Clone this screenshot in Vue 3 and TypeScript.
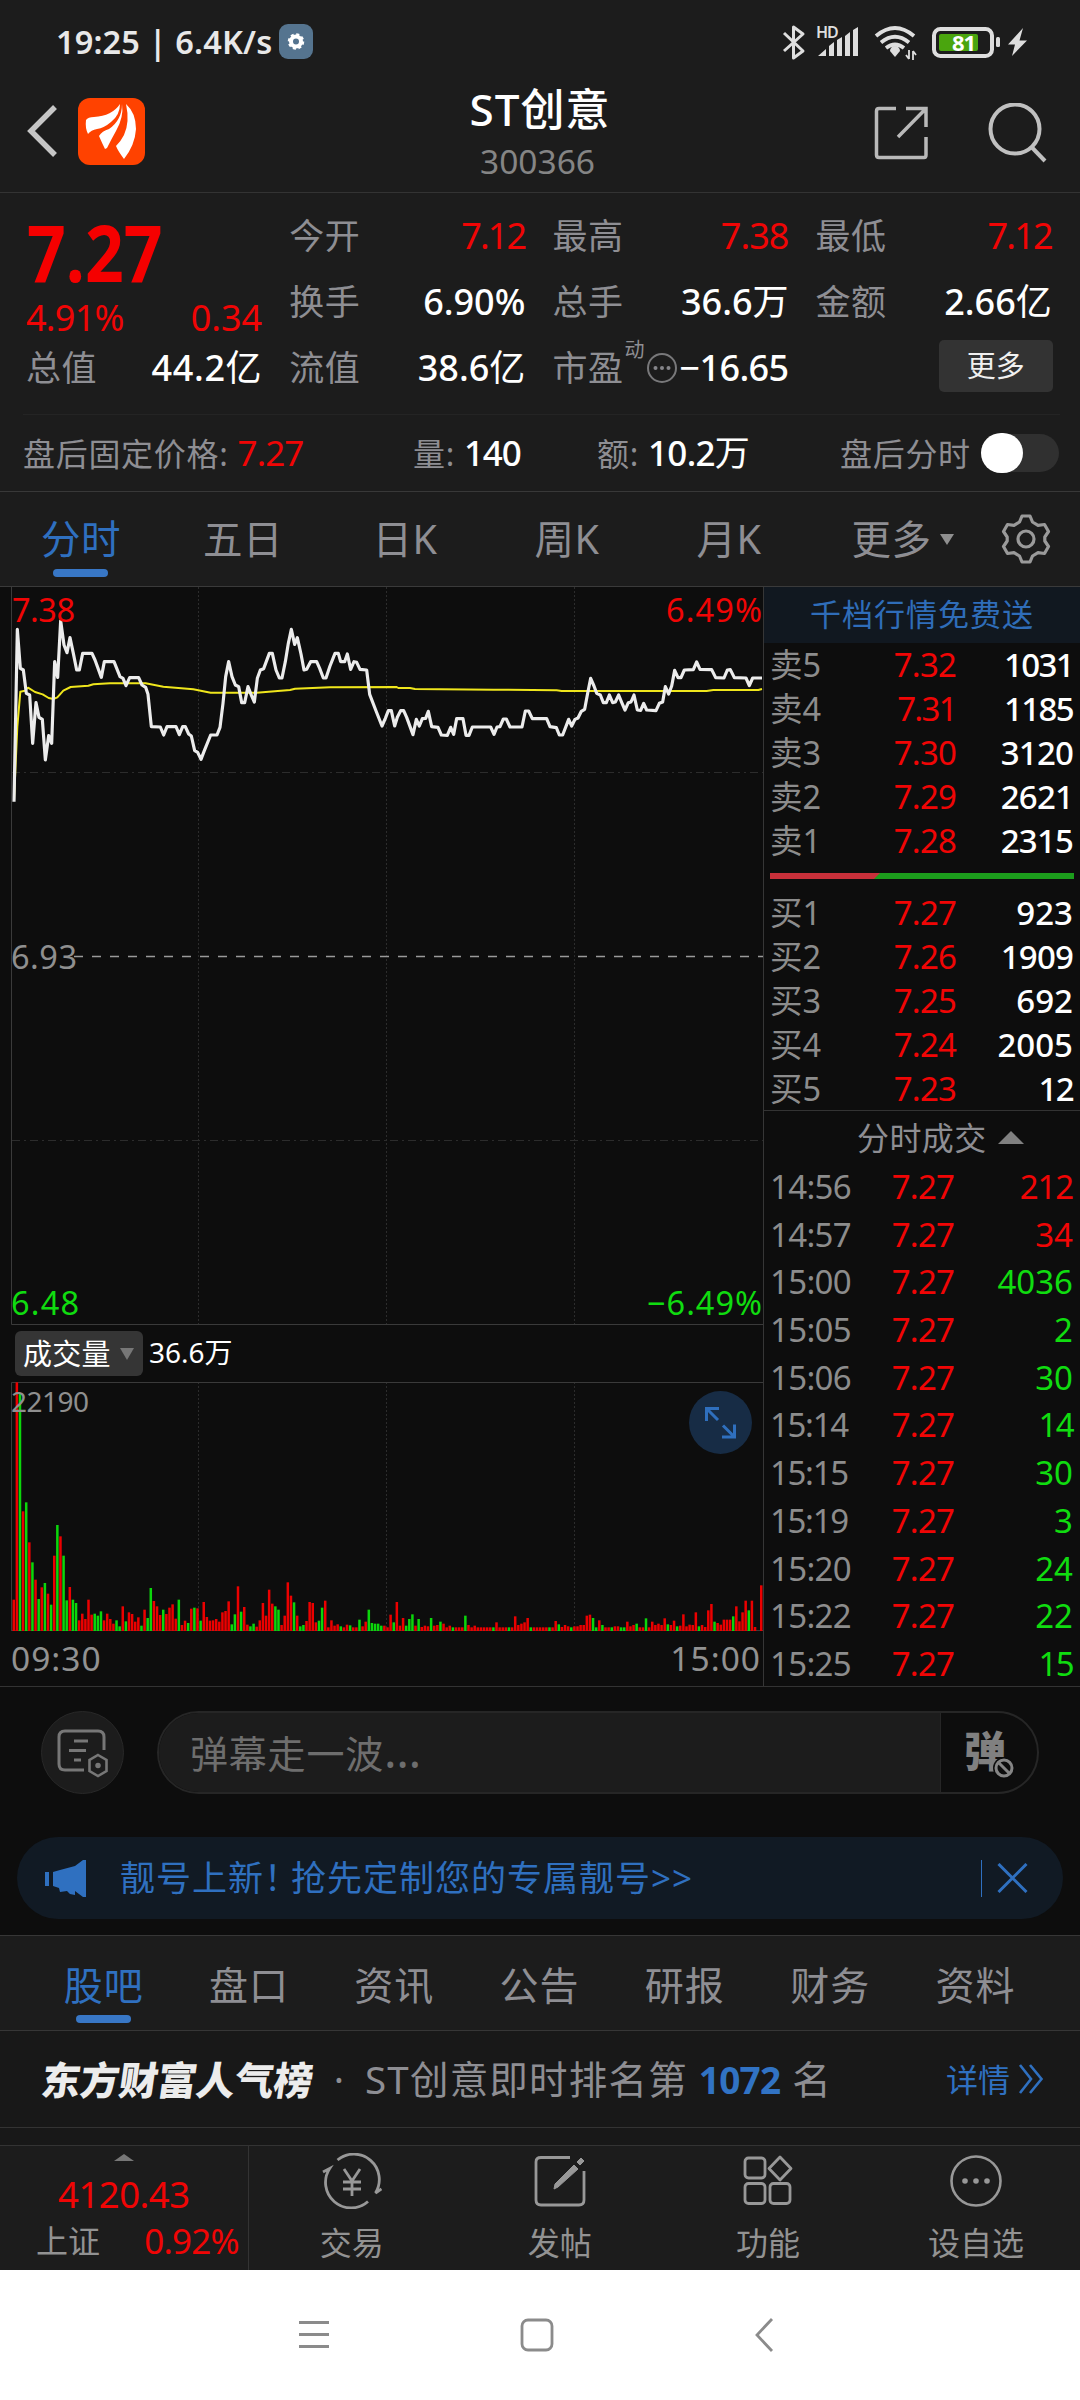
<script setup lang="ts">
interface Level { name: string; price: string; volume: number }
interface Trade { time: string; volume: number; up: boolean }
interface Stat { label: string; value: string; unit?: string; red?: boolean }

const stats: Stat[][] = [
  [
    { label: '今开', value: '7.12', red: true },
    { label: '换手', value: '6.90%' },
    { label: '流值', value: '38.6', unit: '亿' },
  ],
  [
    { label: '最高', value: '7.38', red: true },
    { label: '总手', value: '36.6', unit: '万' },
  ],
  [
    { label: '最低', value: '7.12', red: true },
    { label: '金额', value: '2.66', unit: '亿' },
  ],
]

const asks: Level[] = [
  { name: '卖5', price: '7.32', volume: 1031 },
  { name: '卖4', price: '7.31', volume: 1185 },
  { name: '卖3', price: '7.30', volume: 3120 },
  { name: '卖2', price: '7.29', volume: 2621 },
  { name: '卖1', price: '7.28', volume: 2315 },
]
const bids: Level[] = [
  { name: '买1', price: '7.27', volume: 923 },
  { name: '买2', price: '7.26', volume: 1909 },
  { name: '买3', price: '7.25', volume: 692 },
  { name: '买4', price: '7.24', volume: 2005 },
  { name: '买5', price: '7.23', volume: 12 },
]
const trades: Trade[] = [
  { time: '14:56', volume: 212, up: true },
  { time: '14:57', volume: 34, up: true },
  { time: '15:00', volume: 4036, up: false },
  { time: '15:05', volume: 2, up: false },
  { time: '15:06', volume: 30, up: false },
  { time: '15:14', volume: 14, up: false },
  { time: '15:15', volume: 30, up: false },
  { time: '15:19', volume: 3, up: false },
  { time: '15:20', volume: 24, up: false },
  { time: '15:22', volume: 22, up: false },
  { time: '15:25', volume: 15, up: false },
]
const periods = ['分时', '五日', '日K', '周K', '月K']
const sections = ['股吧', '盘口', '资讯', '公告', '研报', '财务', '资料']

// Tighten runs holding a narrow "1" or an open "7."
function track(text: string | number): Record<string, string> {
  const s = String(text)
  const ones = s.split('1').length - 1
  const em = ones * 0.1 + (s.startsWith('7.') ? 0.1 : 0)
  return { letterSpacing: (-em / s.length).toFixed(3) + 'em' }
}

// Coordinates in thirds of a pixel
const priceLine =
  '42,665 52,148 61,265 70,270 79,340 89,345 98,490 108,368 117,412 127,418 136,540 146,467 155,490 164,245 173,292 182,122 192,195 201,218 210,173 220,220 230,270 238,270 248,220 276,220 285,240 304,292 313,245 342,245 360,290 369,295 378,317 389,293 416,293 426,315 437,322 444,343 454,440 481,441 491,465 501,440 528,440 538,464 548,440 556,440 566,462 574,468 584,512 593,517 603,538 613,512 632,465 651,465 660,442 669,370 677,290 686,245 696,290 706,315 716,320 725,368 734,368 744,320 753,343 763,366 772,295 781,270 791,266 808,220 817,220 828,270 838,294 846,294 856,245 865,190 874,148 884,193 892,173 903,222 912,270 920,268 932,245 950,245 959,265 970,294 978,294 990,258 1005,220 1015,220 1022,245 1034,245 1042,222 1052,268 1062,245 1070,247 1080,268 1100,270 1109,343 1127,390 1146,438 1156,415 1165,392 1174,392 1184,438 1192,412 1202,392 1211,392 1220,412 1239,464 1249,418 1258,438 1267,416 1277,415 1285,394 1295,440 1314,442 1324,465 1342,466 1352,442 1361,463 1370,416 1389,416 1398,466 1407,466 1417,441 1472,441 1482,463 1491,441 1500,440 1510,417 1519,417 1530,441 1566,441 1576,393 1586,393 1597,416 1640,416 1650,440 1669,443 1678,465 1688,465 1706,418 1715,438 1725,418 1734,414 1744,394 1754,388 1763,340 1772,295 1782,318 1790,340 1801,345 1810,368 1819,368 1828,345 1838,368 1846,366 1856,345 1865,367 1875,390 1885,368 1893,366 1902,345 1912,390 1922,391 1931,370 1940,390 1968,392 1978,370 1988,366 1996,320 2006,342 2015,318 2024,271 2034,293 2043,293 2053,270 2080,269 2090,246 2100,268 2135,269 2147,293 2172,294 2182,270 2191,269 2203,293 2238,294 2248,317 2258,294 2286,294'
const averageLine =
  '42,660 52,440 61,335 75,332 84,323 105,336 128,343 146,354 160,357 172,352 190,332 212,321 265,317 280,313 330,310 437,310 490,320 580,328 632,338 770,338 870,330 885,326 990,322 1190,321 1195,324 1230,324 1245,327 1320,328 1480,329 1670,331 1685,333 2120,333 2140,330 2275,330 2286,327'

// One bar per minute; a negative value is a falling minute
const volumes: number[] = [
  94, 746, -714, 359, -386, 266, -206, 154, -96, 131, -144, 112, -79, 226, -318, 284, -226, -92, 132, -94, -84,
  32, 52, 36, 94, 49, -52, -46, -59, 32, 52, 36, 22, -32, -14, 74, -29, 56, 51, 28, 41,
  -16, 64, -39, -129, 90, 74, 48, -64, 51, 70, 80, 37, -94, 18, 31, -24, 67, -70, 68, -31,
  87, 42, 31, 32, 36, 28, 56, 60, 89, -20, -50, 134, -58, 72, 19, -14, -22, 13, 32, 84,
  46, 124, 82, -74, -64, 18, 46, 146, 106, -86, 46, -14, -18, 30, 87, 84, 26, -31, -70, 91,
  11, 32, 16, 20, -14, 11, 19, -17, 11, 11, -34, 14, 28, -64, -24, -22, -22, -16, 16, 11,
  49, -26, 87, 16, 39, -16, -36, -50, 16, -36, 12, 16, 14, -39, 16, 18, -28, 22, 11, 16,
  -11, 11, 11, 11, -46, 18, 11, 16, 11, 11, 11, 11, 11, -11, 26, 11, 11, 11, -11, 11,
  44, 18, 22, 26, 39, -11, 11, 11, 11, 11, 11, -11, 11, 30, -20, 12, 18, 14, -11, 14,
  14, 18, 18, 46, 49, -39, -11, 32, -18, 11, 11, -11, 14, 14, -11, -11, 28, 14, 18, -22,
  11, 11, -38, 11, 28, 18, 22, 18, 38, -20, 18, 31, -14, 16, 50, 14, 19, 18, 56, -14,
  18, 12, 62, 81, -28, 24, 19, 34, 34, 34, -44, 74, 29, 56, 91, -62, 91, 12, 0, 137,
]
const barStep = 747.5 / (volumes.length - 1)
</script>

<template>
  <div class="screen">
    <div class="status">
      <span class="clock">19:25 | 6.4K/s</span>
      <svg class="chip" width="34" height="35" viewBox="0 0 34 35">
        <rect width="34" height="35" rx="9" fill="#55748f" />
        <circle cx="17" cy="17.500" r="5" fill="none" stroke="#fff" stroke-width="4" />
        <circle cx="17" cy="17.500" r="7" fill="none" stroke="#fff" stroke-width="2.500" stroke-dasharray="3 2.500" />
      </svg>
      <svg class="sys" width="250" height="44" viewBox="0 0 250 44" fill="none" stroke="#dedede">
        <path d="M4 13 L23 31 L13.500 38 V7 L23 14 L4 31" stroke-width="3" stroke-linejoin="round" />
        <g fill="#dedede" stroke="none">
          <text x="36" y="18" class="hd">HD</text>
          <path d="M38 36 L46 29 V36 Z M49 26 L54 22 V36 H49 Z M57 20 L62 17 V36 H57 Z M65 16 L70 12 V36 H65 Z M73 10 L78 7 V36 H73 Z" />
          <path d="M110 31 a5 5 0 0 1 10 0 L115 37 Z" />
        </g>
        <path d="M96 16 Q115 0 134 16 M101 22.500 Q115 11 129 22.500 M106 28 Q115 21 124 28" stroke-width="3.800" />
        <path d="M129 30 V39 M126 35 L129 39 M133 40 V31 M136 35 L133 31" stroke-width="1.800" />
        <rect x="154" y="9" width="58" height="27" rx="6.500" stroke-width="4" />
        <rect x="159" y="14" width="39" height="17" rx="2" fill="#4aa50e" stroke="none" />
        <rect x="216" y="17" width="4" height="10" rx="1.500" fill="#dedede" stroke="none" />
        <text x="172" y="31" class="pct">81</text>
        <path d="M243 8 L228 24.500 H235 L232 36 L247 20.500 H239.500 Z" fill="#dedede" stroke="none" />
      </svg>
    </div>

    <header class="head">
      <div class="side">
        <svg width="32" height="52" viewBox="0 0 32 52" fill="none" stroke="#c6c6c6" stroke-width="5.500">
          <path d="M29 2 L5 26 L29 50" />
        </svg>
        <svg class="logo" width="67" height="67" viewBox="0 0 67 67">
          <rect width="67" height="67" rx="12" fill="#ff4200" />
          <g fill="#fff">
            <path d="M8 22 Q10 19 16 19 Q34 18 42 6 Q42 17 33 24 Q26 30 19 31 Q13 32 10 36 Q7 30 8 22 Z" />
            <path d="M44 6 Q46 19 38 33 Q34 40 29 50 L27 51 Q24 45 21 38 Q24 33 31 31 Q44 22 44 6 Z" />
            <path d="M48 6 Q58 15 58 31 Q57 47 46 61 Q40 53 38 48 Q43 43 46 37 Q52 24 48 6 Z" />
          </g>
        </svg>
      </div>
      <div class="title">
        <h1>ST创意</h1>
        <p>300366</p>
      </div>
      <div class="side actions">
        <svg width="54" height="54" viewBox="0 0 54 54" fill="none" stroke="#b9b9b9" stroke-width="3.500">
          <path d="M22 2.500 H5 Q2.500 2.500 2.500 5 V49 Q2.500 51.500 5 51.500 H50 Q52 51.500 52 49 V31 M32 2.500 H52 V21 M51 3.500 L24 31" />
        </svg>
        <svg width="60" height="60" viewBox="0 0 60 60" fill="none" stroke="#c0c0c0" stroke-width="4">
          <circle cx="27" cy="26" r="24.500" />
          <path d="M43.500 44 L57 58" />
        </svg>
      </div>
    </header>

    <section class="quote">
      <div class="cols">
        <div class="col first">
          <div class="big"><span>7.27</span></div>
          <div class="line thin red"><span :style="track('4.91%')">4.91%</span><span>0.34</span></div>
          <div class="line"><label>总值</label><b class="wide">44.2<u>亿</u></b></div>
        </div>
        <div v-for="(col, c) in stats" :key="c" class="col">
          <div v-for="s in col" :key="s.label" class="line">
            <label>{{ s.label }}</label>
            <span v-if="s.red" class="red" :style="track(s.value)">{{ s.value }}</span>
            <b v-else>{{ s.value }}<u v-if="s.unit">{{ s.unit }}</u></b>
          </div>
          <div v-if="c === 1" class="line pe">
            <label>市盈<sup>动</sup></label>
            <svg width="32" height="32" viewBox="0 0 32 32" fill="#85858a">
              <circle cx="16" cy="16" r="14" fill="none" stroke="#78787a" stroke-width="2" />
              <circle cx="9.500" cy="16" r="2" /><circle cx="16" cy="16" r="2" /><circle cx="22.500" cy="16" r="2" />
            </svg>
            <b :style="track('-16.65')">−16.65</b>
          </div>
          <div v-if="c === 2" class="line end"><button>更多</button></div>
        </div>
      </div>
      <div class="after">
        <span class="a1">盘后固定价格: <i class="red" :style="track('7.27')">7.27</i></span>
        <span class="a2">量: <b :style="track('140')">140</b></span>
        <span class="a3">额: <b :style="track('10.2万')">10.2<u>万</u></b></span>
        <span class="a4">盘后分时</span>
        <span class="switch"><i></i></span>
      </div>
    </section>

    <nav class="periods">
      <a v-for="(p, i) in periods" :key="p" :class="{ on: i === 0 }">{{ p }}</a>
      <a class="more">更多<svg width="14" height="11" viewBox="0 0 14 11"><path d="M0 0 H14 L7 11 Z" fill="#8f8f8f" /></svg></a>
      <svg class="gear" width="50" height="52" viewBox="0 0 50 52" fill="none" stroke="#9a9a9a" stroke-width="3.200" stroke-linejoin="round">
        <path d="M21 3 H29 L31.500 9 L37 12.300 L43.500 11.500 L47.500 18.500 L43.800 24 V28 L47.500 33.500 L43.500 40.500 L37 39.700 L31.500 43 L29 49 H21 L18.500 43 L13 39.700 L6.500 40.500 L2.500 33.500 L6.200 28 V24 L2.500 18.500 L6.500 11.500 L13 12.300 L18.500 9 Z" />
        <circle cx="25" cy="26" r="8" />
      </svg>
    </nav>

    <main class="board">
      <div class="left">
        <svg class="chart" width="763" height="738" viewBox="0 0 763 738">
          <g stroke="#2c2c2c" stroke-width="1" fill="none" stroke-dasharray="2 2">
            <path d="M198.500 0 V738 M386.500 0 V738 M574.500 0 V738" />
            <path d="M12 185.500 H763 M12 553.500 H763" stroke-dasharray="8 4 2 4" />
          </g>
          <path d="M11.500 0 V737.500 H763" stroke="#3a3a3a" fill="none" />
          <path d="M74 369.500 H763" stroke="#9a9a9a" stroke-width="1.500" stroke-dasharray="9 9" />
          <g transform="translate(0 -7) scale(.33333)" fill="none" stroke-linejoin="round">
            <polyline :points="averageLine" stroke="#efe61c" stroke-width="6" />
            <polyline :points="priceLine" stroke="#ececec" stroke-width="9.500" />
          </g>
          <text x="12" y="35" class="t red" textLength="63">7.38</text>
          <text x="762" y="35" class="t red" text-anchor="end" textLength="96">6.49%</text>
          <text x="11" y="382" class="t gray" textLength="66">6.93</text>
          <text x="11" y="728" class="t green" textLength="68">6.48</text>
          <text x="762" y="728" class="t green" text-anchor="end" textLength="115">−6.49%</text>
        </svg>
        <div class="volbar">
          <span class="pill">成交量<svg width="14" height="12" viewBox="0 0 14 12"><path d="M0 0 H14 L7 12 Z" fill="#777" /></svg></span>
          <span class="total">36.6万</span>
        </div>
        <div class="volwrap">
          <svg width="763" height="249" viewBox="0 0 763 249">
            <path d="M198.500 0 V249 M386.500 0 V249 M574.500 0 V249" stroke="#2c2c2c" stroke-dasharray="2 2" />
            <path d="M11.500 249 V.5 H763 M11 248.500 H763" stroke="#3a3a3a" fill="none" />
            <rect
              v-for="(v, i) in volumes" :key="i"
              :x="12.500 + i * barStep" :y="249 - Math.abs(v) / 3"
              width="2.500" :height="Math.abs(v) / 3" :fill="v < 0 ? '#0bd60b' : '#ec0000'"
            />
            <text x="11" y="30" class="s gray" textLength="78">22190</text>
          </svg>
          <svg class="expand" width="63" height="63" viewBox="0 0 63 63">
            <circle cx="31.500" cy="31.500" r="31.500" fill="#172c45" />
            <path d="M17.500 30 V17.500 H30 M18 18 L29 29 M33 46 H45.500 V33.500 M45 45.500 L34 34.500" fill="none" stroke="#2f6fbd" stroke-width="3" />
          </svg>
        </div>
        <div class="times"><span>09:30</span><span>15:00</span></div>
      </div>

      <aside class="right">
        <div class="promo">千档行情免费送</div>
        <div class="levels asks">
          <div v-for="a in asks" :key="a.name" class="lv">
            <span class="n">{{ a.name }}</span>
            <span class="p" :style="track(a.price)">{{ a.price }}</span>
            <b :style="track(a.volume)">{{ a.volume }}</b>
          </div>
        </div>
        <svg class="ratio" width="304" height="6" viewBox="0 0 304 6">
          <rect width="304" height="6" fill="#1c9d1c" /><path d="M0 0 H110 L104 6 H0 Z" fill="#c8303a" />
        </svg>
        <div class="levels bids">
          <div v-for="b in bids" :key="b.name" class="lv">
            <span class="n">{{ b.name }}</span>
            <span class="p" :style="track(b.price)">{{ b.price }}</span>
            <b :style="track(b.volume)">{{ b.volume }}</b>
          </div>
        </div>
        <div class="thead">分时成交<svg width="26" height="13" viewBox="0 0 26 13"><path d="M0 13 L13 0 L26 13 Z" fill="#808080" /></svg></div>
        <div class="trades">
          <div v-for="t in trades" :key="t.time" class="lv">
            <span class="n" :style="track(t.time)">{{ t.time }}</span>
            <span class="p" :style="track('7.27')">7.27</span>
            <span class="v" :class="t.up ? 'red' : 'green'" :style="track(t.volume)">{{ t.volume }}</span>
          </div>
        </div>
      </aside>
    </main>

    <section class="chat">
      <span class="round">
        <svg width="52" height="50" viewBox="0 0 52 50" fill="none" stroke="#777" stroke-width="3">
          <path d="M27 41 H8 Q2 41 2 35 V8 Q2 2 8 2 H41 Q47 2 47 8 V21" />
          <path d="M17 12 H31 M12 21.500 H29 M17 31 H24" />
          <path d="M41 26 L49.500 31 V42 L41 47 L32.500 42 V31 Z" stroke-width="2.600" />
          <circle cx="41" cy="36.500" r="2" fill="#777" stroke-width="1.500" />
        </svg>
      </span>
      <div class="input">
        <span class="ph">弹幕走一波<i>…</i></span>
        <span class="dm">弹<svg width="24" height="24" viewBox="0 0 24 24"><circle cx="12" cy="12" r="11" fill="#0d0d0d" /><circle cx="12" cy="12" r="8" fill="none" stroke="#858585" stroke-width="3" /><path d="M6.500 6.500 L17.500 17.500" stroke="#858585" stroke-width="3" /></svg></span>
      </div>
    </section>

    <section class="notice">
      <div class="strip">
        <svg width="42" height="37" viewBox="0 0 42 37" fill="#2f70c0">
          <rect y="12" width="4" height="14" /><path d="M8 12 L15 10 L30 6 L38 0 H41 V37 H38 L30 31 V35 L25 34 L22 31 L15 32 L14 28 L8 26 Z" />
        </svg>
        <span>靓号上新<em>！</em>抢先定制您的专属靓号&gt;&gt;</span>
        <i></i>
        <svg class="x" width="31" height="30" viewBox="0 0 31 30" stroke="#2f70c0" stroke-width="3"><path d="M1.500 1 L29.500 29 M29.500 1 L1.500 29" /></svg>
      </div>
    </section>

    <nav class="sections">
      <a v-for="(s, i) in sections" :key="s" :class="{ on: i === 0 }">{{ s }}</a>
    </nav>

    <section class="rank">
      <strong>东方财富人气榜</strong>
      <span class="dot">·</span>
      <span class="txt">ST创意即时排名第</span>
      <em>1072</em>
      <span class="txt">名</span>
      <span class="detail">详情<svg width="26" height="30" viewBox="0 0 26 30" fill="none" stroke="#2f70c0" stroke-width="2.600"><path d="M2 1 L13 15 L2 29 M12 1 L23.500 15 L12 29" /></svg></span>
    </section>
    <div class="gap"></div>

    <footer class="bar">
      <div class="index">
        <svg width="20" height="7" viewBox="0 0 20 7"><path d="M0 7 L10 0 L20 7 Z" fill="#777" /></svg>
        <div class="red pts">4120.43</div>
        <div class="row"><span>上证</span><span class="red">0.92%</span></div>
      </div>
      <div class="act">
        <svg width="60" height="56" viewBox="0 0 60 56" fill="none" stroke="#989898" stroke-width="2.800">
          <path d="M15.500 7 A25.500 25.500 0 0 1 53.500 40 L59.500 36 M46 48.500 A25.500 25.500 0 0 1 7.700 15.500 L1 19" />
          <path d="M22 16 L30 28 L38 16 M30 28 V43 M21 29 H39 M21 36 H39" />
        </svg>
        <span>交易</span>
      </div>
      <div class="act">
        <svg width="60" height="56" viewBox="0 0 60 56" fill="none" stroke="#989898" stroke-width="2.800">
          <path d="M40 4.500 H11 Q6 4.500 6 9 V47 Q6 52 11 52 H49 Q54 52 54 47 V18" />
          <path d="M24 36 L25 31 L44 12 L48 16 L28 34 Z" fill="#989898" stroke-width="1" />
          <path d="M47 9 L51 5 L54 8 L50 12 Z" fill="#989898" stroke-width="1" />
        </svg>
        <span>发帖</span>
      </div>
      <div class="act">
        <svg width="60" height="56" viewBox="0 0 60 56" fill="none" stroke="#989898" stroke-width="2.800">
          <rect x="7" y="5" width="20" height="20" rx="3.500" /><rect x="7" y="30.500" width="20" height="20" rx="3.500" /><rect x="32" y="30.500" width="20" height="20" rx="3.500" />
          <path d="M42 4 L53 15.500 L42 27 L31 15.500 Z" stroke-linejoin="round" />
        </svg>
        <span>功能</span>
      </div>
      <div class="act">
        <svg width="60" height="56" viewBox="0 0 60 56" fill="none" stroke="#989898" stroke-width="2.600">
          <circle cx="30" cy="28" r="24.500" />
          <g fill="#989898" stroke="none"><circle cx="19" cy="28" r="2.800" /><circle cx="30" cy="28" r="2.800" /><circle cx="41" cy="28" r="2.800" /></g>
        </svg>
        <span>设自选</span>
      </div>
    </footer>

    <div class="sysnav">
      <svg width="1080" height="130" viewBox="0 0 1080 130" fill="none" stroke="#8b8b8b" stroke-width="2.800">
        <path d="M299 52.500 H329 M299 64.500 H329 M299 76.500 H329" />
        <rect x="522" y="50" width="30" height="30" rx="6" />
        <path d="M772 49 L757 65 L772 81" />
      </svg>
    </div>
  </div>
</template>

<style>
body {
  margin: 0;
  background: #0d0d0d;
}
</style>

<style scoped>
.screen {
  width: 1080px;
  height: 2400px;
  overflow: hidden;
  background: #0d0d0d;
  color: #8e8e93;
  font-family: "Noto Sans", "Noto Sans CJK SC", sans-serif;
  font-size: 36px;
  white-space: nowrap;
}
.screen * { box-sizing: border-box; }
svg { display: block; flex: none; }
i, em { font-style: normal; }
u { text-decoration: none; font-weight: 400; }
b { color: #fff; font-weight: 500; }
.red { color: #f00505; fill: #f00505; }
.green { color: #10dc10; fill: #10dc10; }
.gray { fill: #8f8f8f; }

.status {
  height: 83px;
  background: #1c1c1c;
  display: flex;
  align-items: center;
  padding: 0 50px 0 56px;
}
.clock { color: #e8e8e8; font-size: 32.500px; font-weight: 600; line-height: 83px; letter-spacing: .15px; }
.chip { margin-left: 7px; }
.sys { margin-left: auto; }
.hd { font-size: 16px; font-weight: 600; letter-spacing: -1px; }
.pct { fill: #fff; stroke: none; font-size: 22px; font-weight: 700; letter-spacing: -1px; }

.head {
  height: 110px;
  background: #1c1c1c;
  border-bottom: 1px solid #333;
  display: grid;
  grid-template-columns: 1fr auto 1fr;
}
.side { display: flex; align-items: center; padding: 0 0 8px 26px; height: 104px; }
.logo { margin-left: 20px; }
.title { text-align: center; }
.title h1 { margin: 0; color: #fff; font-size: 44px; font-weight: 500; line-height: 52px; letter-spacing: 1px; }
.title p { margin: 0; color: #858585; font-size: 33.500px; line-height: 53px; padding-right: 5px; }
.actions { justify-content: flex-end; gap: 60px; padding: 3px 32px 8px 0; }

.quote { background: #1c1c1c; height: 299px; border-bottom: 1px solid #383838; padding-top: 10px; }
.cols { display: flex; gap: 27px; padding-left: 26px; height: 211px; }
.col { width: 236.200px; }
.line { height: 66px; line-height: 66px; display: flex; justify-content: space-between; }
.line label { font-size: 35px; letter-spacing: .5px; }
.wide { letter-spacing: .6px; }
.thin { height: 34px; line-height: 34px; }
.big { height: 98px; line-height: 98px; font-size: 78px; font-weight: 700; color: #f50000; }
.big span { display: inline-block; transform: scaleX(.87); transform-origin: 0 50%; margin-left: 1px; }
.pe { align-items: center; }
.pe label { display: flex; }
.pe sup { font-size: 20px; line-height: 30px; margin-left: 1px; }
.pe svg { margin-left: -1px; }
.end { justify-content: flex-end; align-items: center; }
.end button {
  width: 114px; height: 52px; border: 0; border-radius: 5px; background: #333; color: #f0f0f0;
  font: inherit; font-size: 29px; line-height: 52px; padding: 0; margin: -4px -1px 0 0;
}
.after {
  height: 78px; line-height: 78px; font-size: 32px; letter-spacing: .7px; display: flex; align-items: center;
  margin: 0 20px 0 23px; border-top: 1px solid #242424;
}
.after b, .after i.red { font-size: 35px; }
.a1 { width: 390px; }
.a2 { width: 184px; }
.a3 { width: 243px; }
.a4 { width: 141px; letter-spacing: .7px; }
.switch { width: 78px; height: 38px; border-radius: 20px; background: #303030; margin-top: -1px; }
.switch i { display: block; width: 42px; height: 40px; margin-top: -1px; border-radius: 21px; background: #fff; }

.periods {
  height: 95px; background: #1c1c1c; border-bottom: 1px solid #3a3a3a; display: flex; align-items: center;
}
.periods a { width: 162px; text-align: center; font-size: 39.500px; line-height: 95px; position: relative; letter-spacing: .6px; }
.on { color: #2f70c0; }
.on::after {
  content: ""; position: absolute; left: 50%; bottom: 10px; width: 55px; height: 8px; margin-left: -28px;
  border-radius: 4px; background: #3877c6;
}
.periods .more { width: 188px; display: flex; align-items: center; justify-content: center; gap: 8px; padding-right: 3px; }
.gear { margin-left: 3px; }

.board { display: flex; height: 1100px; border-bottom: 1px solid #333; }
.left { width: 764px; border-right: 1px solid #363636; }
.t { font-size: 32.500px; }
.s { font-size: 28px; }
.volbar { height: 57px; display: flex; align-items: center; padding: 0 0 0 15px; color: #fff; font-size: 28px; }
.volbar > span { line-height: 44px; }
.pill {
  display: flex; align-items: center; gap: 9px; width: 128px; height: 45px; border-radius: 6px;
  background: #353535; padding-left: 8px; margin-right: 6px; font-size: 29px; letter-spacing: .3px;
}
.total { padding-bottom: 3px; }
.volwrap { position: relative; height: 249px; }
.expand { position: absolute; right: 11px; top: 9px; }
.times { display: flex; justify-content: space-between; padding: 0 2px 0 11px; font-size: 33.500px; line-height: 55px; height: 55px; color: #929292; letter-spacing: 1px; }

.right { width: 316px; }
.promo { height: 56px; line-height: 55px; background: #111820; color: #2f6db9; font-size: 31px; letter-spacing: 1px; text-align: center; padding-right: 0; }
.lv { display: flex; font-size: 33px; height: 44px; line-height: 44px; padding: 0 7px 0 6px; color: #8c8c8c; }
.lv .n { width: 90px; font-size: 32.500px; }
.lv .p { width: 96px; text-align: right; color: #f00505; }
.lv b, .lv .v { flex: 1; text-align: right; }
.levels { height: 220px; }
.asks { height: 230px; }
.ratio { margin-left: 6px; }
.bids { padding-top: 12px; height: 232px; border-bottom: 1px solid #333; }
.thead { height: 53px; line-height: 53px; display: flex; align-items: center; gap: 11px; padding: 0 0 0 93px; font-size: 32px; letter-spacing: .4px; }
.trades .lv { height: 47.700px; line-height: 46px; }
.trades .p { width: 94px; }
.trades .n { font-size: 33px; }

.chat { height: 150px; display: flex; padding: 24px 41px 0 41px; gap: 33px; }
.round { width: 83px; height: 83px; border-radius: 50%; background: #1c1c1c; border: 1px solid #282828; display: flex; align-items: center; justify-content: center; padding-top: 2px; }
.input { width: 882px; height: 83px; border: 2px solid #262626; border-radius: 42px; display: flex; overflow: hidden; }
.ph { flex: 1; background: #1c1c1c; padding-left: 31px; line-height: 80px; color: #6e6e6e; font-size: 38px; letter-spacing: .8px; }
.ph i { font-size: 47px; line-height: 1; }
.dm { width: 97px; border-left: 1px solid #262626; color: #808080; font-size: 42px; font-weight: 800; line-height: 76px; padding-left: 23px; position: relative; }
.dm svg { position: absolute; left: 51px; top: 43px; }

.notice { height: 98px; padding: 0 17px; }
.strip { height: 82px; border-radius: 41px; background: #111a24; display: flex; align-items: center; padding: 0 35px 0 28px; color: #2f70c0; font-size: 35px; line-height: 82px; letter-spacing: 1px; }
.strip span { margin-left: 33px; }
.strip em { margin-right: -9px; }
.strip i { width: 1px; height: 37px; background: #2f70c0; margin-left: auto; margin-right: 15px; }

.sections { height: 96px; background: #1c1c1c; border-top: 1px solid #363636; border-bottom: 1px solid #363636; display: flex; padding-left: 31px; }
.sections a { width: 145.300px; text-align: center; font-size: 39px; letter-spacing: 1px; line-height: 97px; position: relative; }
.sections .on::after { bottom: 7px; }

.rank { height: 97px; background: #181818; border-bottom: 1px solid #333; display: flex; align-items: center; line-height: 97px; padding: 0 36px 0 42px; font-size: 38.500px; }
.rank strong { color: #ececec; font-size: 39px; font-weight: 900; width: 271px; transform: skewX(-8deg); letter-spacing: -.3px; }
.dot { width: 52px; text-align: center; }
.txt { letter-spacing: 1.200px; }
.rank em { color: #3173c4; font-weight: 700; font-size: 37px; margin: 0 12px 0 11px; letter-spacing: -.8px; }
.detail { margin-left: auto; color: #2f70c0; font-size: 32px; display: flex; align-items: center; gap: 8px; }
.gap { height: 17px; background: #181818; }

.bar { height: 125px; background: #1c1c1c; border-top: 1px solid #333; display: flex; color: #929292; font-size: 32px; }
.index { width: 249px; border-right: 1px solid #333; display: flex; flex-direction: column; align-items: center; padding-top: 8px; }
.pts { font-size: 36.500px; line-height: 50px; margin-top: 8px; letter-spacing: -.5px; }
.index .row { display: flex; width: 100%; justify-content: space-between; padding: 0 9px 0 36px; line-height: 44px; font-size: 32px; }
.index .row .red { font-size: 35px; letter-spacing: -.8px; }
.act { width: 208.300px; display: flex; flex-direction: column; align-items: center; padding-top: 7px; line-height: 67px; }
.act:nth-child(2) { margin-left: -1px; }
.sysnav { height: 131px; background: #fff; }
</style>
